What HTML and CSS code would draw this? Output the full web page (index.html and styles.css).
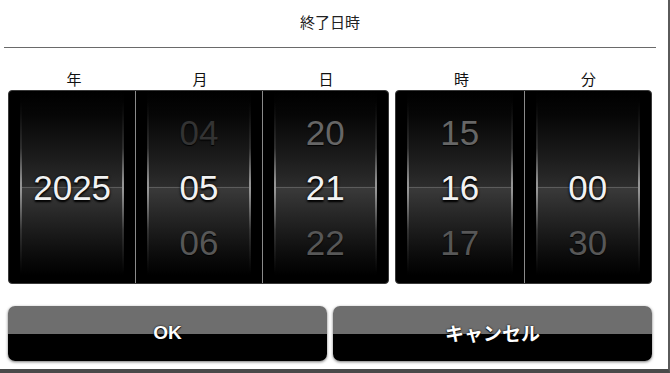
FILE: index.html
```html
<!DOCTYPE html>
<html lang="ja">
<head>
    <meta charset="UTF-8">
    <meta name="viewport" content="width=device-width, initial-scale=1.0">
    <title>終了日時</title>
    <link rel="stylesheet" href="styles.css">
</head>
<body>
    <div class="screen">
        <div class="dialog">
            <div class="title">終了日時</div>

            <div class="content">
                <div class="pickers">
                    <!-- 日付 -->
                    <div class="group date">
                        <div class="labels">
                            <span>年</span>
                            <span>月</span>
                            <span>日</span>
                        </div>
                        <div class="wheel">
                            <div class="col">
                                <div class="drum">
                                    <div class="item"></div>
                                    <div class="item current">2025</div>
                                    <div class="item"></div>
                                </div>
                            </div>
                            <div class="col">
                                <div class="drum">
                                    <div class="item prev faint">04</div>
                                    <div class="item current">05</div>
                                    <div class="item next">06</div>
                                </div>
                            </div>
                            <div class="col">
                                <div class="drum">
                                    <div class="item prev">20</div>
                                    <div class="item current">21</div>
                                    <div class="item next">22</div>
                                </div>
                            </div>
                        </div>
                    </div>

                    <!-- 時刻 -->
                    <div class="group time">
                        <div class="labels">
                            <span>時</span>
                            <span>分</span>
                        </div>
                        <div class="wheel">
                            <div class="col">
                                <div class="drum">
                                    <div class="item prev">15</div>
                                    <div class="item current">16</div>
                                    <div class="item next">17</div>
                                </div>
                            </div>
                            <div class="col">
                                <div class="drum">
                                    <div class="item"></div>
                                    <div class="item current">00</div>
                                    <div class="item next">30</div>
                                </div>
                            </div>
                        </div>
                    </div>
                </div>

                <div class="buttons">
                    <button class="btn">OK</button>
                    <button class="btn">キャンセル</button>
                </div>
            </div>
        </div>
    </div>
</body>
</html>
```

FILE: styles.css
```css
/* 日時ピッカー */
body {
    margin: 0;
    padding: 0;
    background-color: #ffffff;
    font-family: "Liberation Sans", Arial, "Noto Sans CJK JP", sans-serif;
}
.screen {
    width: 670px;
    height: 373px;
    box-sizing: border-box;
    border-right: 2px solid #5a5a5a;
    border-bottom: 4px solid #4a4a4a;
    overflow: hidden;
}
.dialog {
    width: 652px;
    margin-left: 4px;
}
.title {
    height: 47px;
    line-height: 45px;
    text-align: center;
    font-size: 15px;
    color: #222;
    border-bottom: 1px solid #6a6a6a;
}
.content {
    padding: 0 4px;
}
.pickers {
    display: grid;
    grid-template-columns: 381px 257px;
    gap: 6px;
}
.labels {
    display: grid;
    grid-auto-flow: column;
    grid-auto-columns: 1fr;
    height: 42px;
    padding: 22px 0 0 3px;
    box-sizing: border-box;
    line-height: 20px;
    font-size: 15px;
    color: #111;
    text-align: center;
}
.wheel {
    display: grid;
    grid-auto-flow: column;
    grid-auto-columns: 1fr;
    height: 194px;
    background: #000;
    border-radius: 4px;
    border: 1px solid #3a3a3a;
    box-sizing: border-box;
    overflow: hidden;
}
.col {
    padding: 0 11px;
    border-left: 1px solid #8a8a8a;
}
.col:first-child {
    border-left: none;
}
.drum {
    position: relative;
    height: 100%;
    display: flex;
    flex-direction: column;
    justify-content: center;
    border-left: 2px solid;
    border-right: 2px solid;
    border-image: linear-gradient(rgba(255,255,255,0) 6%, rgba(255,255,255,0.1) 30%, rgba(255,255,255,0.5) 48%, rgba(255,255,255,0.45) 53%, rgba(255,255,255,0.1) 72%, rgba(255,255,255,0) 94%) 1;
    background: linear-gradient(#000 0%, #060606 12%, #1c1c1c 35%, #2c2c2c 49.5%, #3a3a3a 50.5%, #262626 65%, #0c0c0c 85%, #000 96%);
}
.drum::after {
    content: "";
    position: absolute;
    left: 0;
    right: 0;
    top: 50%;
    height: 1px;
    background: #5c5c5c;
}
.item {
    position: relative;
    z-index: 1;
    height: 55px;
    line-height: 55px;
    text-align: center;
    font-size: 35px;
    color: #5c5c5c;
    text-shadow: 0 1px 1px #000;
}
.item.prev {
    color: #666;
}
.item.faint {
    color: #333;
}
.item.next {
    color: #575757;
}
.item.current {
    color: #f2f2f2;
    text-shadow: 0 2px 2px #000, 0 0 3px rgba(0,0,0,0.8);
}
.buttons {
    display: grid;
    grid-template-columns: 1fr 1fr;
    gap: 6px;
    margin-top: 22px;
}
.btn {
    height: 55px;
    padding: 0 0 2px;
    border: none;
    border-radius: 7px;
    background: linear-gradient(#6e6e6e 50%, #000 50%);
    box-shadow: 0 1px 3px rgba(0, 0, 0, 0.55);
    color: #fff;
    font-family: "Liberation Sans", Arial, "Noto Sans CJK JP", sans-serif;
    font-size: 19px;
    font-weight: bold;
    text-shadow: 0 1px 1px #000, 0 0 2px #000;
    cursor: pointer;
}
```
